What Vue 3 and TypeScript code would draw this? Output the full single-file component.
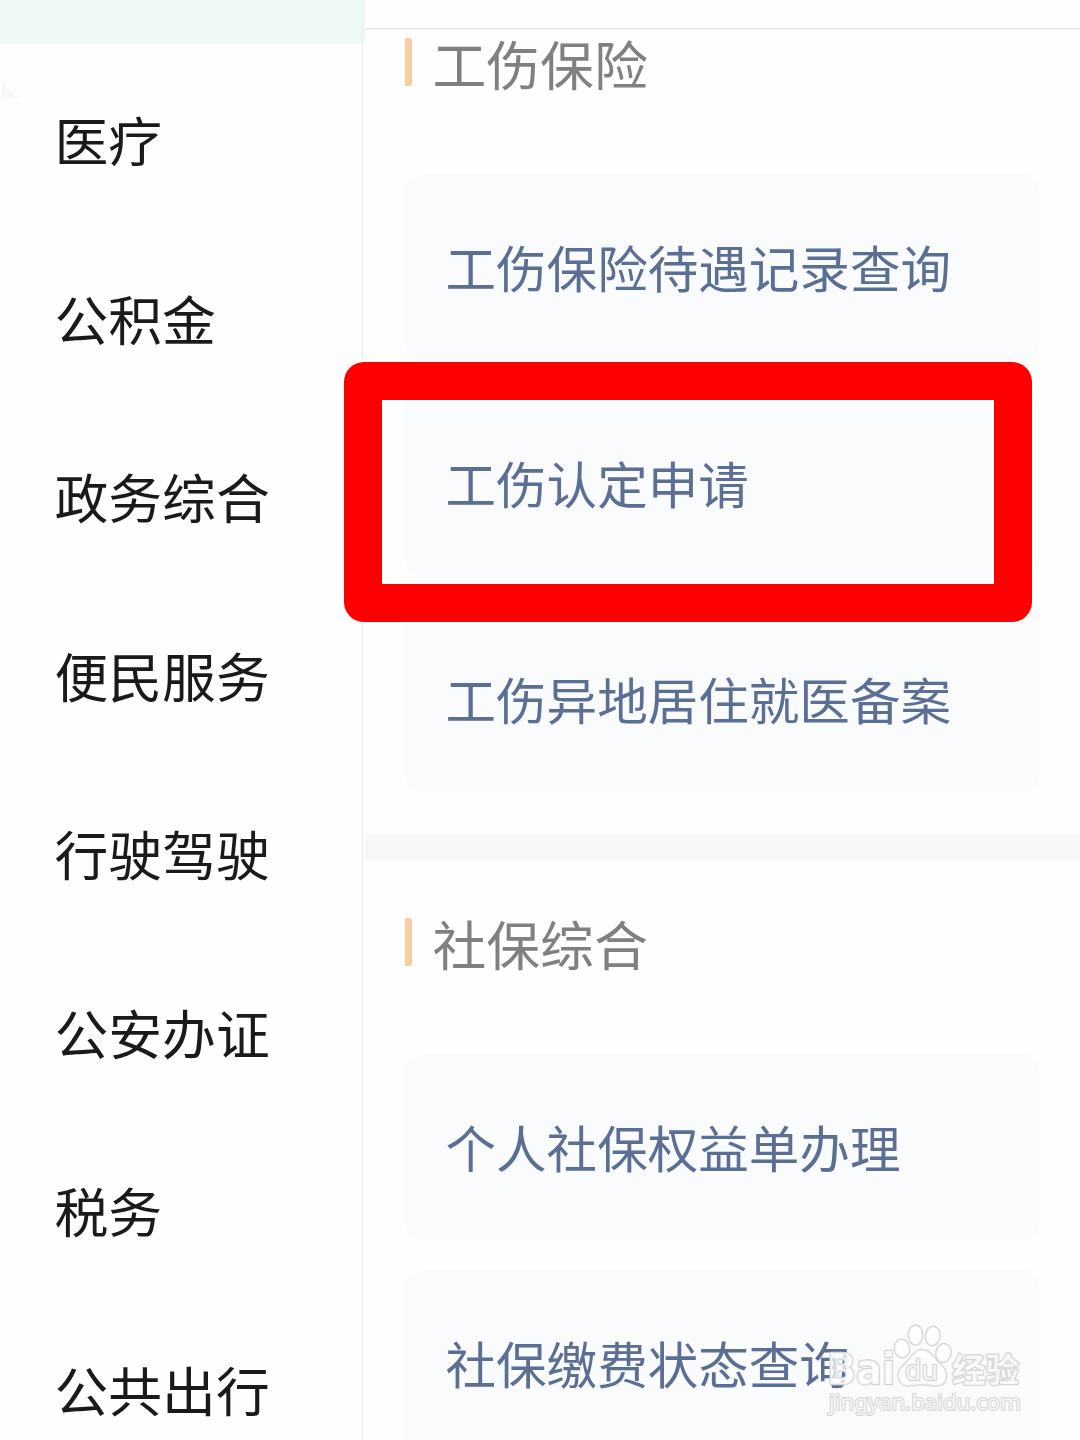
<script setup lang="ts">
interface Section {
  title: string
  services: string[]
}

const categories: string[] = ['医疗', '公积金', '政务综合', '便民服务', '行驶驾驶', '公安办证', '税务', '公共出行']

const sections: Section[] = [
  { title: '工伤保险', services: ['工伤保险待遇记录查询', '工伤认定申请', '工伤异地居住就医备案'] },
  { title: '社保综合', services: ['个人社保权益单办理', '社保缴费状态查询'] },
]
</script>

<template>
  <div class="screen">
    <nav class="sidebar">
      <div class="active-category"></div>
      <svg class="corner" width="24" height="22" viewBox="0 0 24 22">
        <path d="M0 0C2 11 11 20 22 21H0Z" fill="#f7f7f7" />
      </svg>
      <div v-for="name in categories" :key="name" class="category">{{ name }}</div>
    </nav>

    <main class="content">
      <div class="topline"></div>
      <section v-for="section in sections" :key="section.title" class="section">
        <h2 class="title"><span class="bar"></span><span>{{ section.title }}</span></h2>
        <div class="cards">
          <div v-for="service in section.services" :key="service" class="card">{{ service }}</div>
        </div>
      </section>
    </main>

    <div class="highlight"></div>

    <svg class="watermark" width="210" height="110" viewBox="820 1315 210 110">
      <g fill="#fff" fill-opacity="0.75" stroke="#d6d6d6" stroke-width="2.4" paint-order="stroke" stroke-linejoin="round">
        <text class="brand" x="827" y="1384" font-size="42" textLength="68" lengthAdjust="spacingAndGlyphs">Bai</text>
        <ellipse cx="902" cy="1348.500" rx="7.200" ry="9" transform="rotate(-8 902 1348.500)" />
        <ellipse cx="915.500" cy="1335" rx="6.800" ry="9.500" />
        <ellipse cx="932.700" cy="1336" rx="7" ry="9.200" transform="rotate(10 932.700 1336)" />
        <ellipse cx="943.500" cy="1353" rx="7.200" ry="9" transform="rotate(12 943.500 1353)" />
        <path d="M922 1350C914 1350 911 1358 906 1363C900 1368 897 1373 899 1379C901 1386 907 1386 914 1385C920 1384 925 1384 931 1385C939 1387 945 1385 946 1377C947 1370 943 1367 938 1362C933 1357 930 1350 922 1350Z" />
        <text class="url" x="905" y="1380" font-size="28" textLength="33" lengthAdjust="spacingAndGlyphs">du</text>
        <text x="952" y="1382" font-size="33" font-weight="700" textLength="67" lengthAdjust="spacingAndGlyphs">经验</text>
        <text class="url" x="829" y="1410" font-size="22" stroke-width="2" textLength="192" lengthAdjust="spacingAndGlyphs">jingyan.baidu.com</text>
      </g>
    </svg>
  </div>
</template>

<style>
body {
  margin: 0;
}
</style>

<style scoped>
.screen {
  position: relative;
  display: flex;
  width: 1080px;
  height: 1440px;
  overflow: hidden;
  background: #fefefe;
  font-family: 'Noto Sans CJK SC', sans-serif;
}

.sidebar {
  position: relative;
  box-sizing: border-box;
  flex: none;
  width: 363px;
  border-right: 1px solid #ebebeb;
}

.active-category {
  width: 365px;
  height: 44px;
  margin-bottom: 6px;
  background: linear-gradient(90deg, #effaf5 362px, #e3efea 362px 363px, #effaf5 363px);
}

.corner {
  position: absolute;
  left: 1.5px;
  top: 77px;
}

.category {
  height: 178.5px;
  padding-left: 54.500px;
  color: #1a1a1a;
  font-size: 53.8px;
  line-height: 178.5px;
  white-space: nowrap;
}

.content {
  flex: none;
  width: 715px;
  margin-left: 2px;
}

.topline {
  height: 2px;
  margin-top: 28px;
  background: linear-gradient(#e2e2e2 50%, #f5f5f5 50%);
}

.section {
  padding: 8px 40px 40.5px;
}

.section + .section {
  padding-top: 57px;
  border-top: 27px solid #f7f7f7;
}

.title {
  display: flex;
  align-items: center;
  height: 48px;
  margin: 0 0 87px;
  color: #808080;
  font-size: 53.8px;
  font-weight: 400;
  line-height: 48px;
  white-space: nowrap;
}

.title span:last-child {
  position: relative;
  top: 1px;
}

.bar {
  width: 7px;
  height: 47.5px;
  margin-right: 20.5px;
  border-radius: 0 3px 3px 0;
  background: #facd9e;
}

.cards {
  display: flex;
  flex-direction: column;
  gap: 27.5px;
}

.card {
  box-sizing: border-box;
  height: 188.5px;
  padding-left: 40.5px;
  border-radius: 20px;
  background: #fafbfd;
  color: #5b6e94;
  font-size: 50.55px;
  line-height: 187px;
  white-space: nowrap;
}

.highlight {
  position: absolute;
  left: 344.4px;
  top: 361.5px;
  box-sizing: border-box;
  width: 687.5px;
  height: 260.5px;
  border: 38px solid #f00;
  border-radius: 20px;
}

.watermark {
  position: absolute;
  left: 820px;
  top: 1315px;
  font-family: 'Liberation Sans', 'Noto Sans CJK SC', sans-serif;
}

.brand {
  font-family: 'DejaVu Sans', sans-serif;
  font-weight: 700;
}

.url {
  font-family: 'Noto Sans', sans-serif;
}
</style>
